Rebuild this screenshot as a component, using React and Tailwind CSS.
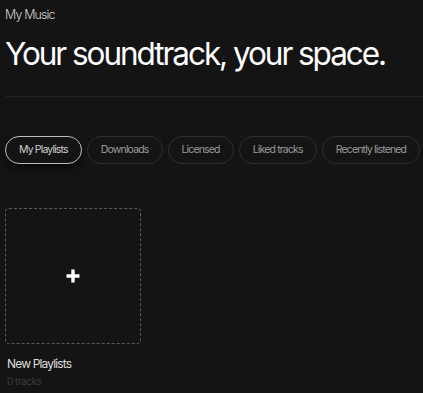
const tabs = ['My Playlists', 'Downloads', 'Licensed', 'Liked tracks', 'Recently listened']

function Pill({ label, active }) {
  return (
    <button
      className={`h-[28px] shrink-0 rounded-full border px-[13px] text-[10.5px] tracking-[-0.08em] ${
        active
          ? 'border-[#bdbdbd] text-[#cfcfcf] shadow-[0_4px_10px_rgba(0,0,0,0.6)]'
          : 'border-[#2e2e2e] text-[#9a9a9a]'
      }`}
    >
      {label}
    </button>
  )
}

export default function App() {
  return (
    <div className="min-h-[393px] overflow-hidden bg-[#141414] pl-[5px] pt-[6px] font-['Inter',sans-serif] text-white">
      <p className="text-[12.5px] font-light leading-[18px] tracking-[-0.07em] text-[#d0d0d0]">My Music</p>
      <h1 className="mt-[10px] text-[31.5px] leading-[40px] tracking-[-0.065em] whitespace-nowrap">
        Your soundtrack, your space.
      </h1>
      <div className="mt-[22px] h-px bg-[#232323]" />

      <div className="mt-[39px] flex gap-[5px]">
        {tabs.map((t, i) => (
          <Pill key={t} label={t} active={i === 0} />
        ))}
      </div>

      <div className="mt-[44px] w-[136px]">
        <button className="flex h-[136px] w-[136px] items-center justify-center rounded-[4px] border border-dashed border-[#5a5a5a]">
          <svg width="16" height="16" viewBox="0 0 16 16">
            <path d="M8 1.5v13M1.5 8h13" stroke="white" strokeWidth="3.4" />
          </svg>
        </button>
        <p className="mt-[12px] pl-[2px] text-[12px] leading-[16px] tracking-[-0.07em] text-[#dcdcdc]">New Playlists</p>
        <p className="mt-[3px] pl-[2px] text-[10px] leading-[13px] tracking-[-0.05em] text-[#3c3c3c]">0 tracks</p>
      </div>
    </div>
  )
}
